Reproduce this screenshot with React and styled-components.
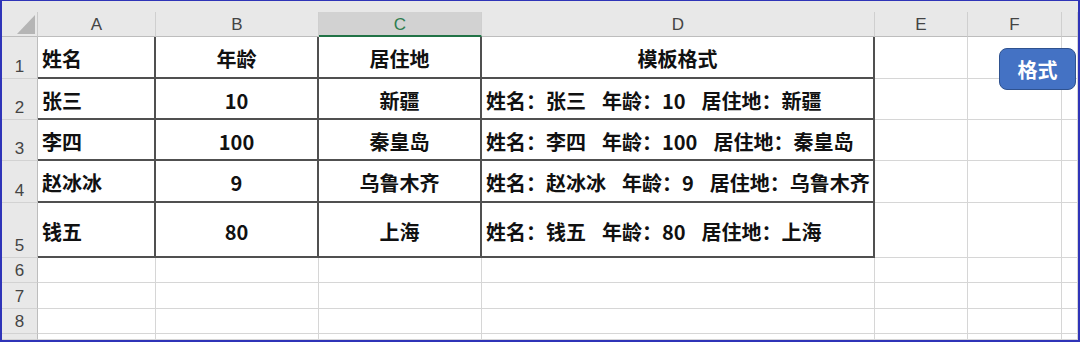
import React from 'react'
import styled, { createGlobalStyle, css } from 'styled-components'

const GlobalStyle = createGlobalStyle`
    html, body {
        margin: 0;
        padding: 0;
        background: #ffffff;
    }
    body {
        font-family: "Noto Sans CJK SC", "Noto Sans", sans-serif;
    }
`;

const columns = ['A', 'B', 'C', 'D', 'E', 'F', '']
const activeColumn = 'C'

const people = [
    { name: '张三', age: '10', city: '新疆', height: 41 },
    { name: '李四', age: '100', city: '秦皇岛', height: 41 },
    { name: '赵冰冰', age: '9', city: '乌鲁木齐', height: 42 },
    { name: '钱五', age: '80', city: '上海', height: 55 },
]

// last row is only a sliver at the bottom edge, its number isn't visible
const emptyRows = [
    { n: 6, height: 25 },
    { n: 7, height: 26 },
    { n: 8, height: 25 },
    { n: '', height: 6 },
]

const Template = ({ p }) => (
    <>
        <Part>姓名：{p.name}</Part>
        <Part $gap>年龄：{p.age}</Part>
        <Part $gap>居住地：{p.city}</Part>
    </>
)

const App = () => {
    const rowHeights = [25, 42, ...people.map(p => p.height), ...emptyRows.map(r => r.height)]

    return (
        <>
            <GlobalStyle />
            <Frame>
                <TopStrip />
                <Sheet style={{ gridTemplateRows: rowHeights.map(h => `${h}px`).join(' ') }}>
                    <Corner />
                    {columns.map((c, i) => (
                        <ColHeader key={i} $active={c === activeColumn}>{c}</ColHeader>
                    ))}

                    <RowHeader>1</RowHeader>
                    <Cell $table>姓名</Cell>
                    <Cell $table $align="center">年龄</Cell>
                    <Cell $table $align="center">居住地</Cell>
                    <Cell $table $align="center">模板格式</Cell>
                    <Cell />
                    <Cell />
                    <Cell />

                    {people.map((p, i) => (
                        <React.Fragment key={p.name}>
                            <RowHeader>{i + 2}</RowHeader>
                            <Cell $table>{p.name}</Cell>
                            <Cell $table $align="center">{p.age}</Cell>
                            <Cell $table $align="center">{p.city}</Cell>
                            <Cell $table><Template p={p} /></Cell>
                            <Cell />
                            <Cell />
                            <Cell />
                        </React.Fragment>
                    ))}

                    {emptyRows.map((r, idx) => (
                        <React.Fragment key={idx}>
                            <RowHeader>{r.n}</RowHeader>
                            {columns.map((c, i) => <Cell key={i} />)}
                        </React.Fragment>
                    ))}
                </Sheet>
                <ShapeButton>格式</ShapeButton>
            </Frame>
        </>
    )
}

const Frame = styled.div`
    position: relative;
    width: 1080px;
    height: 342px;
    box-sizing: border-box;
    border: 2px solid #2f34b8;
    border-top-width: 1px;
    background: #e8e8e8;
    overflow: hidden;
`;

const TopStrip = styled.div`
    height: 11px;
    background: #e8e8e8;
`;

const Sheet = styled.div`
    display: grid;
    grid-template-columns: 36px 118px 163px 163px 393px 93px 94px 1fr;
    background: #ffffff;
    overflow: hidden;
`;

const Corner = styled.div`
    background: #e8e8e8;
    border-right: 1px solid #cbcbcb;
    border-bottom: 1px solid #bdbdbd;
    box-sizing: border-box;
    display: flex;
    align-items: flex-end;
    justify-content: flex-end;
    padding: 0 2px 2px 0;
    &::after {
        content: '';
        width: 18px;
        height: 19px;
        background: #b5b5b5;
        clip-path: polygon(100% 0, 100% 100%, 0 100%);
    }
`;

const ColHeader = styled.div`
    background: #e8e8e8;
    border-right: 1px solid #cfcfcf;
    border-bottom: 1px solid #bdbdbd;
    box-sizing: border-box;
    display: flex;
    align-items: center;
    justify-content: center;
    font-family: "Liberation Sans", Arial, sans-serif;
    font-size: 17px;
    color: #444444;
    padding-top: 2px;
    ${({ $active }) => $active && css`
        background: #d2d2d2;
        color: #2e7d4f;
        border-bottom: 2px solid #217346;
    `}
`;

const RowHeader = styled.div`
    background: #e8e8e8;
    border-right: 1px solid #bdbdbd;
    border-bottom: 1px solid #d2d2d2;
    box-sizing: border-box;
    display: flex;
    align-items: flex-end;
    justify-content: center;
    padding-bottom: 1px;
    font-family: "Liberation Sans", Arial, sans-serif;
    font-size: 17px;
    line-height: 20px;
    color: #444444;
    overflow: hidden;
`;

const Cell = styled.div`
    box-sizing: border-box;
    border-right: 1px solid #d6d6d6;
    border-bottom: 1px solid #d6d6d6;
    display: flex;
    align-items: center;
    justify-content: ${({ $align }) => $align === 'center' ? 'center' : 'flex-start'};
    padding: 3px 0 0 ${({ $align }) => $align === 'center' ? '0' : '4px'};
    font-size: 20px;
    font-weight: 700;
    color: #111111;
    white-space: pre;
    overflow: hidden;
    ${({ $table }) => $table && css`
        border-right: 2px solid #505050;
        border-bottom: 2px solid #505050;
    `}
`;

const Part = styled.span`
    margin-left: ${({ $gap }) => $gap ? '16px' : '0'};
`;

const ShapeButton = styled.div`
    position: absolute;
    left: 997px;
    top: 47px;
    width: 77px;
    height: 42px;
    box-sizing: border-box;
    display: flex;
    align-items: center;
    justify-content: center;
    background: #4472c4;
    border: 1px solid #2f528f;
    border-radius: 8px;
    color: #ffffff;
    font-size: 20px;
    font-weight: 700;
`;

export default App
